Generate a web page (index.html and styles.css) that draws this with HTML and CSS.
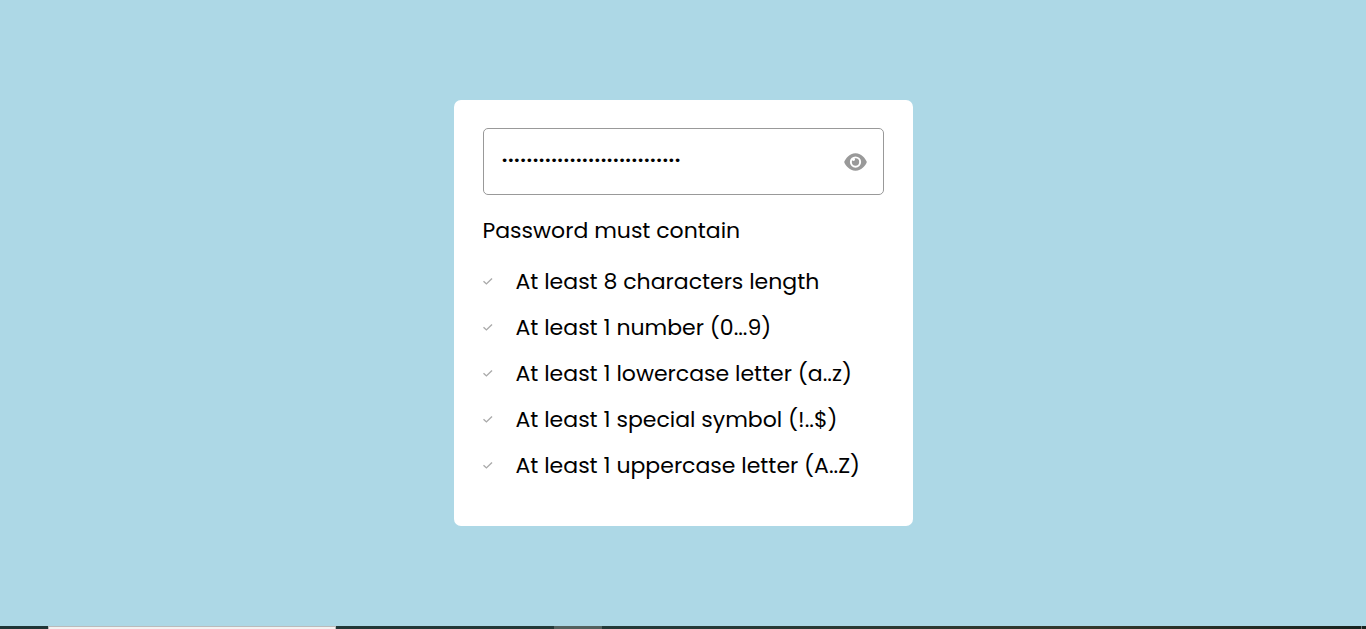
FILE: index.html
```html
<!DOCTYPE html>
<html lang="en">
<head>
<meta charset="utf-8">
<meta name="viewport" content="width=device-width, initial-scale=1">
<title>Password validation</title>
<link rel="stylesheet" href="styles.css">
</head>
<body>
<svg class="symbols" aria-hidden="true">
  <symbol id="check" viewBox="0 0 10 10"><path d="M.5 4.200l2.900 2.700L9 1.400"/></symbol>
</svg>
<main class="page">
  <form class="wrapper">
    <div class="pass-field">
      <input class="pass-input" type="password" aria-label="Password" value="aaaaaaaaaaaaaaaaaaaaaaaaaaaaa">
      <button class="toggle" type="button" aria-label="Show password">
        <svg class="eye" viewBox="0 0 576 512"><path d="M288 32c-80.800 0-145.500 36.800-192.600 80.600C48.600 156 17.300 208 2.500 243.700c-3.300 7.900-3.300 16.700 0 24.600C17.300 304 48.600 356 95.400 399.400C142.500 443.200 207.200 480 288 480s145.500-36.800 192.600-80.600c46.800-43.500 78.100-95.400 93-131.100c3.300-7.900 3.300-16.700 0-24.600c-14.900-35.700-46.200-87.700-93-131.100C433.500 68.800 368.800 32 288 32zM144 256a144 144 0 1 1 288 0a144 144 0 1 1-288 0zm144-94c-8 0-16 1-24 3.500c8 7 12 16 12 27c0 20-16 36-36 36c-14 0-26-7-32-18c-9 14-14 29-14 45.500a94 94 0 1 0 94-94z"/></svg>
      </button>
    </div>
    <section class="content">
      <p class="title">Password must contain</p>
      <ul class="requirements">
        <li class="requirement"><svg class="check" aria-hidden="true"><use href="#check"/></svg><span>At least 8 characters length</span></li>
        <li class="requirement"><svg class="check" aria-hidden="true"><use href="#check"/></svg><span>At least 1 number (0...9)</span></li>
        <li class="requirement"><svg class="check" aria-hidden="true"><use href="#check"/></svg><span>At least 1 lowercase letter (a..z)</span></li>
        <li class="requirement"><svg class="check" aria-hidden="true"><use href="#check"/></svg><span>At least 1 special symbol (!..$)</span></li>
        <li class="requirement"><svg class="check" aria-hidden="true"><use href="#check"/></svg><span>At least 1 uppercase letter (A..Z)</span></li>
      </ul>
    </section>
  </form>
</main>
<footer class="taskbar">
  <div class="start"></div>
  <div class="search"></div>
  <div class="apps"></div>
  <div class="active-app"></div>
  <div class="tray"></div>
</footer>
</body>
</html>
```
FILE: styles.css
```css
* { box-sizing: border-box; margin: 0; padding: 0; }

body {
  display: flex;
  flex-direction: column;
  min-height: 100vh;
  background: #add8e6;
  color: #000;
  font-family: Poppins, Inter, sans-serif;
}

.symbols { position: absolute; width: 0; height: 0; }

.page {
  flex: 1;
  display: flex;
  align-items: center;
  justify-content: center;
}

.wrapper {
  width: 100%;
  max-width: 459px;
  padding: 28px 29px 30px;
  border-radius: 7px;
  background: #fff;
}

.pass-field {
  display: flex;
  align-items: center;
  height: 67px;
  padding: 0 16px 0 18px;
  border: 1px solid #999;
  border-radius: 5px;
}

.pass-input {
  flex: 1;
  min-width: 0;
  height: 48px;
  padding-bottom: 4px;
  border: 0;
  outline: none;
  background: none;
  font-family: inherit;
  font-size: 15px;
}

.toggle {
  display: flex;
  border: 0;
  background: none;
  cursor: pointer;
}

.eye { width: 23px; height: 20px; fill: #999; }

.content { margin-top: 20px; }

.title, .requirement { font-size: 22px; line-height: 32px; }

.requirements { margin-top: 19px; list-style: none; }

.requirement {
  display: flex;
  align-items: center;
  margin-bottom: 14px;
}

.check {
  width: 10px;
  height: 10px;
  margin-right: 23px;
  fill: none;
  stroke: #aaa;
  stroke-width: 1.4;
}

.taskbar {
  display: flex;
  height: 3px;
  background: linear-gradient(90deg, #1f3536 0%, #243a38 50%, #33382c 80%, #17231f 100%);
}

.start { width: 48px; }
.search { width: 288px; border: 1px solid #bbb; border-bottom: 0; background: #f2f2f2; }
.apps { width: 218px; }
.active-app { width: 48px; background: #53625f; }
.tray { flex: 1; margin-right: 4px; border-right: 1px solid #777; }
```
